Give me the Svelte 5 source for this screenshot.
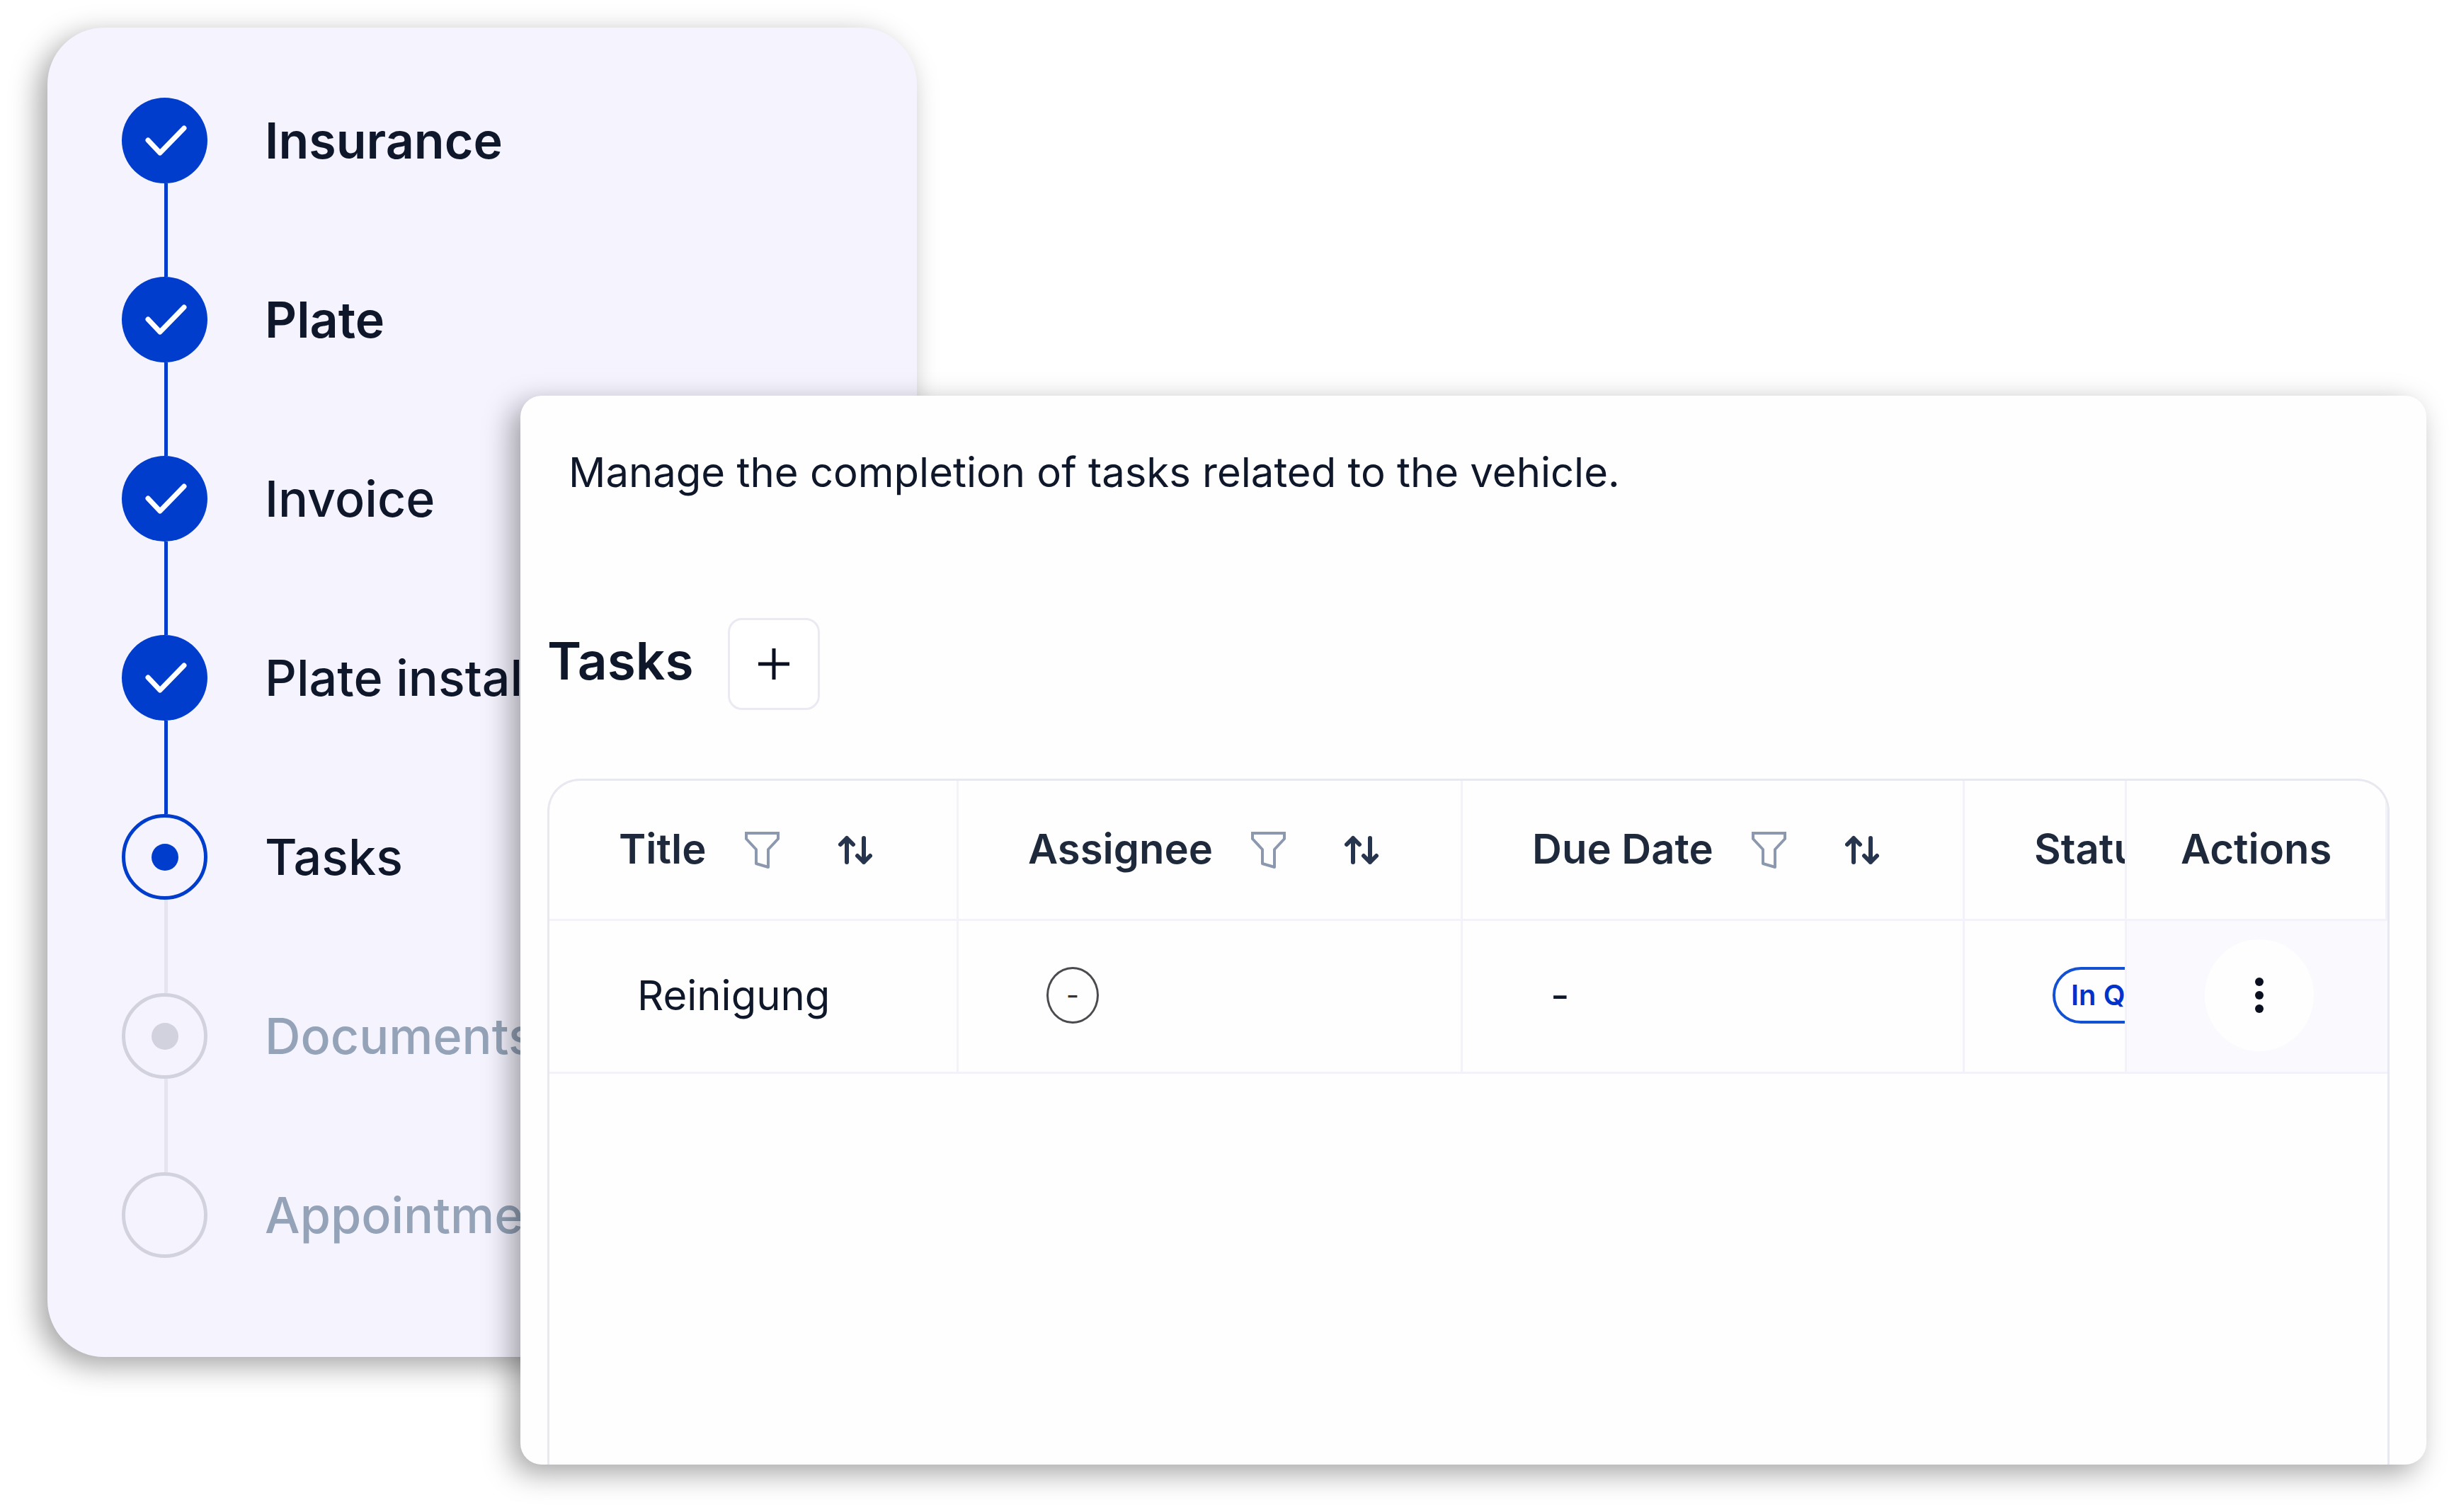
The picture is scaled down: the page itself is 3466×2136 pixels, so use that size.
<script lang="ts">
  type StepState = 'done' | 'current' | 'pending' | 'open';

  interface Step {
    label: string;
    state: StepState;
    strong?: boolean;
  }

  interface Task {
    title: string;
    assignee: string;
    dueDate: string;
    status: string;
  }

  const steps: Step[] = [
    { label: 'Insurance', state: 'done', strong: true },
    { label: 'Plate', state: 'done', strong: true },
    { label: 'Invoice', state: 'done' },
    { label: 'Plate installation', state: 'done' },
    { label: 'Tasks', state: 'current' },
    { label: 'Documents', state: 'pending' },
    { label: 'Appointment', state: 'open' },
  ];

  const columns = ['Title', 'Assignee', 'Due Date'];

  let tasks: Task[] = $state([
    { title: 'Reinigung', assignee: '-', dueDate: '-', status: 'In Queue' },
  ]);
</script>

<main class="stage">
  <nav class="card steps-card" aria-label="Progress">
    <ol class="steps">
      {#each steps as step, i (step.label)}
        <li class="step {step.state}" aria-current={step.state === 'current' ? 'step' : undefined}>
          <div class="rail">
            <span class="marker">
              {#if step.state === 'done'}
                <svg viewBox="0 0 121 121" aria-hidden="true">
                  <path d="M37 60 54 78 88 43" />
                </svg>
              {:else if step.state !== 'open'}
                <span class="dot"></span>
              {/if}
            </span>
            {#if i < steps.length - 1}
              <span class="connector"></span>
            {/if}
          </div>
          <span class="step-label" class:strong={step.strong}>{step.label}</span>
        </li>
      {/each}
    </ol>
  </nav>

  <section class="card tasks-card">
    <p class="intro">Manage the completion of tasks related to the vehicle.</p>

    <header class="tasks-header">
      <h2>Tasks</h2>
      <button type="button" class="add" aria-label="Add task">
        <svg viewBox="0 0 44 44" aria-hidden="true">
          <path d="M22 0V44M0 22H44" />
        </svg>
      </button>
    </header>

    <div class="table-box">
      <table>
        <colgroup>
          <col class="col-title" />
          <col class="col-assignee" />
          <col class="col-due" />
          <col />
          <col class="col-actions" />
        </colgroup>
        <thead>
          <tr>
            {#each columns as column (column)}
              <th scope="col">
                <div class="head">
                  <span class="head-text">{column}</span>
                  <button type="button" class="filter" aria-label="Filter by {column}">
                    <svg viewBox="0 0 50 54" aria-hidden="true">
                      <path d="M2 3H47V11L33 26V51L16 46V26L2 11Z" />
                      <path d="M0 3H49" />
                    </svg>
                  </button>
                  <button type="button" class="sort" aria-label="Sort by {column}">
                    <svg viewBox="0 0 48 42" aria-hidden="true">
                      <path d="M12 38V4M3 13 12 4 21 13M36 4V38M27 29 36 38 45 29" />
                    </svg>
                  </button>
                </div>
              </th>
            {/each}
            <th scope="col"><div class="head-text">Status</div></th>
            <th scope="col" class="actions"><div class="head-text">Actions</div></th>
          </tr>
        </thead>
        <tbody>
          {#each tasks as task (task.title)}
            <tr>
              <td>{task.title}</td>
              <td><span class="avatar">{task.assignee}</span></td>
              <td>{task.dueDate}</td>
              <td><span class="badge">{task.status}</span></td>
              <td class="actions">
                <button type="button" class="more" aria-label="Task actions">
                  <svg viewBox="0 0 12 50" aria-hidden="true">
                    <circle cx="6" cy="6" r="6" />
                    <circle cx="6" cy="25" r="6" />
                    <circle cx="6" cy="44" r="6" />
                  </svg>
                </button>
              </td>
            </tr>
          {/each}
        </tbody>
      </table>
    </div>
  </section>
</main>

<style>
  :global(body) {
    margin: 0;
    background: #ffffff;
    font-family: Inter, 'Liberation Sans', sans-serif;
    font-optical-sizing: none;
    color: #0f172a;
  }

  /* the tasks card overlaps the steps card in the middle column */
  .stage {
    display: grid;
    grid-template-columns: 668px 560px 1fr;
    grid-template-rows: 520px auto 152px;
    padding: 39px 39px 67px 67px;
  }

  .card {
    box-shadow: -12px 12px 40px rgba(0, 0, 0, 0.36);
  }

  .steps-card {
    grid-column: 1 / 3;
    grid-row: 1 / 3;
    padding: 99px 104px 140px 105px;
    border-radius: 80px;
    background: #f5f3fe;
  }

  .steps {
    margin: 0;
    padding: 0;
    list-style: none;
  }

  .step {
    display: flex;
    align-items: flex-start;
    gap: 81px;
    --tone: #003dcc;
    --line: #003dcc;
  }

  .step.current {
    --line: #e5e4ef;
  }

  .step.pending,
  .step.open {
    --tone: #d2d2de;
    --line: #e5e4ef;
    color: #94a3b8;
  }

  .rail {
    display: flex;
    flex-direction: column;
    align-items: center;
    flex-shrink: 0;
  }

  .marker {
    display: flex;
    align-items: center;
    justify-content: center;
    box-sizing: border-box;
    width: 121px;
    height: 121px;
    border: 5px solid var(--tone);
    border-radius: 50%;
  }

  .done .marker {
    border: none;
    background: var(--tone);
  }

  .marker svg {
    width: 121px;
    height: 121px;
    fill: none;
    stroke: #ffffff;
    stroke-width: 7;
    stroke-linecap: round;
    stroke-linejoin: round;
  }

  .dot {
    width: 38px;
    height: 38px;
    border-radius: 50%;
    background: var(--tone);
  }

  .connector {
    width: 5px;
    height: 132px;
    margin-left: 4px;
    background: var(--line);
  }

  .step-label {
    font-size: 70px;
    line-height: 121px;
    font-weight: 500;
    white-space: nowrap;
  }

  .step-label.strong {
    font-weight: 600;
  }

  .tasks-card {
    grid-column: 2 / 4;
    grid-row: 2 / 4;
    display: flex;
    flex-direction: column;
    min-width: 0;
    padding: 66px 52px 0 38px;
    border-radius: 30px;
    background: #fefefe;
    z-index: 1;
  }

  .intro {
    margin: 0 0 164px 30px;
    font-size: 58px;
    line-height: 84px;
  }

  .tasks-header {
    display: flex;
    align-items: center;
    gap: 48px;
    margin-bottom: 97px;
  }

  h2 {
    margin: 0;
    padding-bottom: 8px;
    font-size: 73px;
    line-height: 96px;
    font-weight: 600;
  }

  button {
    display: flex;
    align-items: center;
    justify-content: center;
    padding: 0;
    border: none;
    background: none;
    cursor: pointer;
  }

  svg {
    display: block;
  }

  .add {
    width: 130px;
    height: 130px;
    border: 3px solid #ebeaf2;
    border-radius: 20px;
    background: #ffffff;
  }

  .add svg {
    width: 44px;
    height: 44px;
    stroke: #0b1020;
    stroke-width: 5;
  }

  .table-box {
    flex: 1;
    overflow: hidden;
    border: 3px solid #e8e8f0;
    border-bottom: none;
    border-radius: 46px 46px 0 0;
  }

  table {
    width: 100%;
    table-layout: fixed;
    border-collapse: separate;
    border-spacing: 0;
    font-size: 58px;
    line-height: 84px;
  }

  .col-title {
    width: 578px;
  }

  .col-assignee {
    width: 712px;
  }

  .col-due {
    width: 709px;
  }

  .col-actions {
    width: 368px;
  }

  th,
  td {
    box-sizing: border-box;
    overflow: hidden;
    border-right: 3px solid #f3f2fa;
    border-bottom: 3px solid #f3f2fa;
    text-align: left;
    white-space: nowrap;
  }

  th {
    height: 198px;
    padding: 0 0 0 98px;
    color: #1e293b;
    font-weight: 600;
  }

  td {
    height: 216px;
    padding: 0 0 4px 124px;
  }

  th.actions {
    padding: 0 0 0 76px;
  }

  td.actions {
    padding: 0 0 4px 110px;
    border-right: none;
    background: #faf9fe;
  }

  .head {
    display: flex;
    align-items: center;
  }

  .head-text {
    padding-bottom: 4px;
  }

  .filter {
    margin-left: 54px;
  }

  .filter svg {
    width: 50px;
    height: 54px;
    fill: none;
    stroke: #8c98ae;
    stroke-width: 4;
    stroke-linejoin: round;
  }

  .sort {
    margin-left: 82px;
  }

  .sort svg {
    width: 48px;
    height: 42px;
    fill: none;
    stroke: #27344d;
    stroke-width: 6;
    stroke-linecap: round;
    stroke-linejoin: round;
  }

  .avatar,
  .badge {
    display: flex;
    align-items: center;
    box-sizing: border-box;
    height: 80px;
    font-size: 40px;
  }

  .avatar {
    justify-content: center;
    width: 74px;
    border: 3px solid #4a4a4f;
    border-radius: 50%;
    color: #333338;
  }

  .badge {
    width: max-content;
    padding: 0 22px;
    border: 4px solid #1450d2;
    border-radius: 40px;
    color: #0033cc;
    font-weight: 600;
  }

  .more {
    width: 154px;
    height: 158px;
    border-radius: 50%;
    background: #fefefe;
  }

  .more svg {
    width: 12px;
    height: 50px;
    fill: #0b1020;
  }
</style>
